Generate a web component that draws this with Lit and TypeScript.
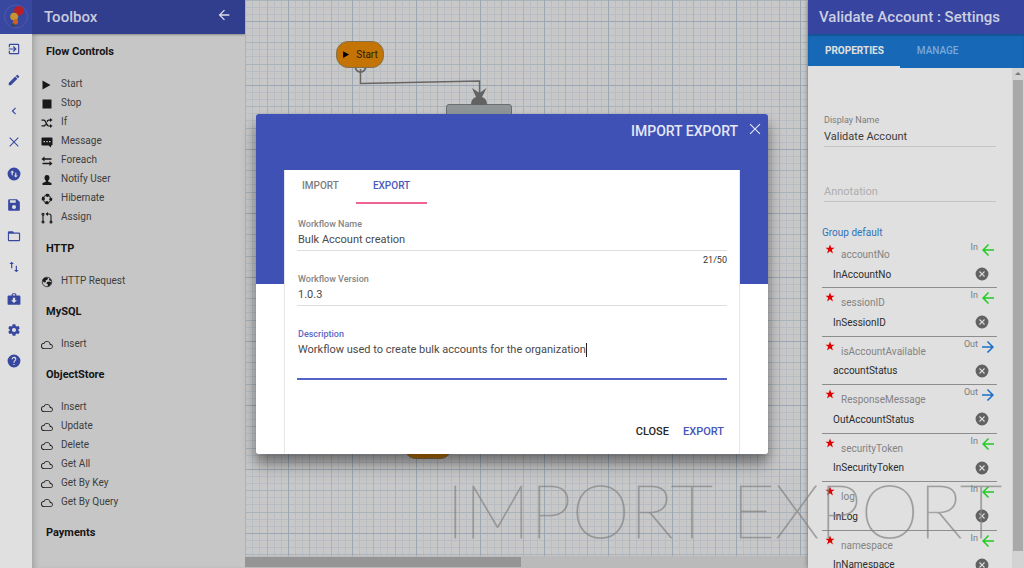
import { LitElement, html, css, svg } from "lit";
import { customElement, property, state } from "lit/decorators.js";

const ICONS: Record<string, string> = {
  exit: "M10.08 15.58 11.5 17l5-5-5-5-1.42 1.41L12.67 11H3v2h9.67zM19 3H5a2 2 0 0 0-2 2v4h2V5h14v14H5v-4H3v4a2 2 0 0 0 2 2h14a2 2 0 0 0 2-2V5a2 2 0 0 0-2-2z",
  edit: "M3 17.25V21h3.75L17.81 9.94l-3.75-3.75zM20.71 7.04a1 1 0 0 0 0-1.41l-2.34-2.34a1 1 0 0 0-1.41 0l-1.83 1.83 3.75 3.75z",
  chevron: "M15.41 7.41 14 6l-6 6 6 6 1.41-1.41L10.83 12z",
  close: "M20 5.2 18.8 4 12 10.8 5.2 4 4 5.2l6.8 6.8L4 18.8 5.2 20l6.8-6.8 6.8 6.8 1.2-1.2-6.8-6.8z",
  swapCircle: "M12 1a11 11 0 1 0 0 22 11 11 0 0 0 0-22zM5.500 9.500 9 6l3.500 3.500H10V14H8V9.500zM18.500 14.500 15 18l-3.500-3.500H14V10h2v4.500z",
  save: "M17 2H4a2 2 0 0 0-2 2v16c0 1.100.890 2 2 2h16a2 2 0 0 0 2-2V7zm-5 17a3.500 3.500 0 1 1 0-7 3.500 3.500 0 0 1 0 7zm3-11H5V4h10z",
  folder: "M20 19H3.500V8H20.500V19M20.500 6H12l-2-2H3.500A2 2 0 0 0 1.500 6v13a2 2 0 0 0 2 2h17a2 2 0 0 0 2-2V8a2 2 0 0 0-2-2z",
  swap: "M8 3 4 7h3v7h2V7h3zM17 17v-7h-2v7h-3l4 4 4-4z",
  kit: "M10 2 8 4v2H3a2 2 0 0 0-2 2v12a2 2 0 0 0 2 2h18a2 2 0 0 0 2-2V8a2 2 0 0 0-2-2h-5V4l-2-2zm0 2h4v2h-4zm2 15-5-5h3v-4h4v4h3z",
  gear: "M12 15.500A3.500 3.500 0 1 1 12 8.500a3.500 3.500 0 0 1 0 7m7.430-2.530c.040-.320.070-.640.070-.970s-.030-.660-.070-1l2.110-1.630c.190-.150.240-.420.120-.640l-2-3.460c-.120-.220-.390-.310-.610-.220l-2.490 1c-.520-.390-1.060-.730-1.690-.980l-.370-2.650A.506.506 0 0 0 14 2h-4c-.250 0-.460.180-.500.420l-.370 2.650c-.630.250-1.170.590-1.690.980l-2.490-1c-.220-.090-.490 0-.610.220l-2 3.460c-.130.220-.070.490.120.640L4.570 11c-.040.340-.070.670-.070 1s.030.650.070.970l-2.110 1.660c-.190.150-.250.420-.120.640l2 3.460c.120.220.390.300.610.220l2.490-1.010c.520.400 1.060.740 1.690.990l.370 2.650c.040.240.250.420.500.420h4c.250 0 .460-.180.500-.420l.370-2.650c.630-.260 1.170-.590 1.690-.990l2.490 1.010c.220.080.490 0 .610-.220l2-3.460c.120-.220.070-.490-.120-.640z",
  help: "M12 1a11 11 0 1 0 0 22 11 11 0 0 0 0-22zm1 18h-2v-2h2zm2.070-7.750-.9.920C13.450 12.900 13 13.500 13 15h-2v-.5c0-1.100.450-2.100 1.170-2.830l1.240-1.260A2 2 0 1 0 10 9H8a4 4 0 1 1 7.070 2.250z",
  back: "M20 11H7.830l5.590-5.590L12 4l-8 8 8 8 1.410-1.410L7.830 13H20z",
  play: "M3 3v18l16-9z",
  stop: "M3 3h18v18H3z",
  shuffle: "M1 5h5c5 0 6 12 10 12h2v-3l5 4-5 4v-3h-3C9 19 9 7.500 5.500 7.500H1zM1 19v-2.500h4c1.500 0 2.600-1.500 3.500-3.200l1.400 2.500C8.700 17.700 7.500 19 5.500 19zM18 2l5 4-5 4V7.500h-2c-1.500 0-2.500 1.300-3.400 2.900l-1.400-2.500C12.300 6.200 13.700 5 16 5h2z",
  message: "M3 3h18a2 2 0 0 1 2 2v12a2 2 0 0 1-2 2h-1v4l-5-4H3a2 2 0 0 1-2-2V5a2 2 0 0 1 2-2zm2 7v2.500h3V10zm5.500 0v2.500h3V10zM16 10v2.500h3V10z",
  repeat: "M7 3v3.500h14v3H7V13L1 8zM17 12v3.500H3v3h14V22l6-5z",
  user: "M12 2c3.500 0 5 2.300 5 5.500 0 2.500-1.300 4.500-2.500 5.500v2.500l6.500 2.500V22H3v-4l6.500-2.500V13C8.300 12 7 10 7 7.500 7 4.300 8.500 2 12 2z",
  cloud: "M19.350 10.040A7.490 7.490 0 0 0 5.350 8.040 6 6 0 0 0 6 20h13a5 5 0 0 0 .35-9.960zM19 18.300H6a4.300 4.300 0 0 1 0-8.600h.710a5.500 5.500 0 0 1 10.790 1.800v.500H19a3.150 3.150 0 0 1 0 6.300z",
  cancel: "M12 1a11 11 0 1 0 0 22 11 11 0 0 0 0-22zm5 14.600L15.600 17 12 13.400 8.400 17 7 15.600l3.600-3.600L7 8.400 8.400 7l3.600 3.600L15.600 7 17 8.400 13.400 12z",
  star: "m12 1 3 8h8l-6.500 5 2.500 8.500-7-5-7 5L7.500 14 1 9h8z",
};

const icon = (name: string) => {
  let body = svg`<path fill="currentColor" fill-rule="evenodd" d=${ICONS[name] ?? ""}></path>`;
  if (name === "ring")
    body = svg`<circle cx="12" cy="12" r="7.500" fill="none" stroke="currentColor" stroke-width="2"></circle><circle cx="12" cy="12" r="7.500" fill="none" stroke="currentColor" stroke-width="6" stroke-dasharray="6 5.780" stroke-dashoffset="3"></circle>`;
  if (name === "branch")
    body = svg`<g fill="none" stroke="currentColor" stroke-width="2.200"><circle cx="4" cy="4.500" r="2"></circle><path d="M4 6v12M20 18V7q0-3-4-3h-4"></path><circle cx="4" cy="20" r="2"></circle><circle cx="20" cy="20" r="2"></circle></g><path fill="currentColor" d="M14 0v8L9 4z"></path>`;
  if (name === "globe")
    body = svg`<circle cx="12" cy="12" r="9.500" fill="none" stroke="currentColor" stroke-width="1.500"></circle><path fill="currentColor" d="M4 6l4-3 6 1-1 3-4 2 1 3-4 1-3-4zM12 12l5-1 4 2-3 6-5 2 1-4-3-2zM17 4l4 5-3 1-2-3z"></path>`;
  return html`<svg class="icon" viewBox="0 0 24 24" aria-hidden="true">${body}</svg>`;
};

const iconStyles = css`
  * { box-sizing: border-box; }
  .icon { display: block; width: 100%; height: 100%; }
  button { border: 0; padding: 0; background: none; color: inherit; font: inherit; cursor: pointer; }
  input, textarea { border: 0; padding: 0; margin: 0; background: none; color: inherit; font: inherit; outline: 0; min-width: 0; }
`;

@customElement("tool-rail")
class ToolRail extends LitElement {
  static styles = [iconStyles, css`
    :host { display: flex; flex-direction: column; width: 32px; background: #e0e0e0; color: #3847a0; }
    .logo { flex: none; height: 33px; background: #3847a0; padding: 4px 3px; box-shadow: 0 1px #3847a0; }
    .nav { height: 344px; display: flex; flex-direction: column; }
    .nav button { flex: 1; display: grid; place-items: center; padding-right: 4px; }
    .glyph { width: 14px; height: 14px; }
  `];
  render() {
    const items = [["exit", "Exit"], ["edit", "Edit"], ["chevron", "Back"], ["close", "Close"], ["swapCircle", "Convert"], ["save", "Save"], ["folder", "Open"], ["swap", "Import export"], ["kit", "Packages"], ["gear", "Settings"], ["help", "Help"]];
    return html`
      <div class="logo">
        <svg class="icon" viewBox="0 0 26 26" aria-hidden="true">
          <circle cx="13" cy="13" r="12" fill="none" stroke="#4d5bae" stroke-width="1"></circle>
          <path d="M14 12l-2 6-2 4" stroke="#b88040" stroke-width="3"></path>
          <circle cx="16" cy="7" r="5" fill="#b82028"></circle>
          <circle cx="11" cy="13" r="4" fill="#c89430"></circle>
          <circle cx="12.500" cy="18.500" r="2.700" fill="#d06020"></circle>
          <circle cx="10" cy="22" r="2" fill="#37475a"></circle>
        </svg>
      </div>
      <nav class="nav">${items.map(([n, t]) => html`<button aria-label=${t}><span class="glyph">${icon(n)}</span></button>`)}</nav>`;
  }
}

@customElement("tool-box")
class ToolBox extends LitElement {
  static styles = [iconStyles, css`
    :host { display: block; background: #c6c6c6; overflow: hidden; box-shadow: inset 6px 0 6px -4px rgba(0,0,0,.2); color: #3d3d3d; }
    .head { display: flex; align-items: center; justify-content: space-between; height: 34px; padding: 0 13px 0 12px; background: #313e8e; color: #c9cbdd; box-shadow: 0 1px 2px rgba(0,0,0,.3); }
    h1 { margin: 0; font-size: 15px; font-weight: 500; line-height: 20px; }
    .back { width: 16px; height: 16px; color: #dcdde8; margin-bottom: 4px; }
    h2 { margin: 0; padding-left: 14px; font-size: 11px; line-height: 19px; font-weight: 700; color: #151515; }
    .groups { padding-top: 8px; }
    ul { list-style: none; margin: 0; padding: 13px 0 12px 9px; }
    section:first-child ul { padding-bottom: 13px; }
    li { display: flex; align-items: center; gap: 8px; height: 19px; font-size: 10px; line-height: 19px; }
    .glyph { width: 12px; height: 12px; color: #181818; margin-top: 2px; }
  `];
  render() {
    const groups: [string, [string, string][]][] = [
      ["Flow Controls", [["play", "Start"], ["stop", "Stop"], ["shuffle", "If"], ["message", "Message"], ["repeat", "Foreach"], ["user", "Notify User"], ["ring", "Hibernate"], ["branch", "Assign"]]],
      ["HTTP", [["globe", "HTTP Request"]]],
      ["MySQL", [["cloud", "Insert"]]],
      ["ObjectStore", ["Insert", "Update", "Delete", "Get All", "Get By Key", "Get By Query"].map((t) => ["cloud", t] as [string, string])],
      ["Payments", []],
    ];
    return html`
      <header class="head"><h1>Toolbox</h1><button class="back" aria-label="Collapse toolbox">${icon("back")}</button></header>
      <div class="groups">${groups.map(([t, items]) => html`<section><h2>${t}</h2>
        <ul>${items.map(([n, l]) => html`<li><span class="glyph">${icon(n)}</span>${l}</li>`)}</ul></section>`)}</div>`;
  }
}

@customElement("flow-canvas")
class FlowCanvas extends LitElement {
  static styles = [iconStyles, css`
    :host { display: flex; flex-direction: column; position: relative; background: #c8c8c8; overflow: hidden; }
    .board { position: relative; flex: 1; overflow: hidden; }
    .grid { position: absolute; inset: 0; width: 100%; height: 100%; }
    .wires { position: absolute; left: 0; top: 0; width: 300px; height: 120px; }
    .node { position: absolute; left: 91px; top: 41px; width: 48px; height: 27px; display: flex; align-items: center; justify-content: center; gap: 5px; border: 1px solid #83724d; border-radius: 12px; background: #c37405; color: #2b1c04; font-size: 10px; }
    .node-glyph { width: 9px; height: 9px; color: #000; }
    .end { top: 432px; left: 159px; }
    .task { position: absolute; left: 201px; top: 104px; width: 66px; height: 40px; border: 1px solid #6b6e70; border-radius: 3px; background: #8f9698; }
    .track { flex: none; height: 12px; padding: 1px 0; background: #bababa; }
    .thumb { width: 49%; height: 10px; background: #959595; }
  `];
  render() {
    const minor = [7, 14, 28, 35, 50, 57];
    return html`
      <div class="board">
        <svg class="grid" aria-hidden="true">
          <defs><pattern id="g" x="43" y="21" width="64" height="64" patternUnits="userSpaceOnUse">
            ${minor.map((p) => svg`<path d="M${p}.5 0V64M0 ${p}.5H64" stroke="#b7bdc3"></path>`)}
            ${[21, 43].map((p) => svg`<path d="M${p}.5 0V64M0 ${p}.5H64" stroke="#a8b3bc"></path>`)}
            <path d="M.5 0V64M0 .5H64" stroke="#9ba8b3"></path>
          </pattern></defs>
          <rect width="100%" height="100%" fill="url(#g)"></rect>
        </svg>
        <div class="task"></div>
        <svg class="wires" viewBox="0 0 300 120" aria-hidden="true">
          <circle cx="115.500" cy="67" r="5" fill="#c8c8c8" stroke="#666" stroke-width="2"></circle>
          <path d="M115.500 69v14.500L234.500 81v15" fill="none" stroke="#666" stroke-width="1.400"></path>
          <path d="M227 88l7.500 5 7-5-4.500 9a8 8 0 0 1 5 8h-16a8 8 0 0 1 5-8z" fill="#626262"></path>
        </svg>
        <div class="node"><span class="node-glyph">${icon("play")}</span>Start</div>
        <div class="node end"></div>
      </div>
      <div class="track"><div class="thumb"></div></div>`;
  }
}

@customElement("settings-panel")
class SettingsPanel extends LitElement {
  static styles = [iconStyles, css`
    :host { display: flex; flex-direction: column; background: #e0e0e0; overflow: hidden; box-shadow: -1px 0 4px rgba(0,0,0,.3); z-index: 1; }
    .head { flex: none; height: 34px; padding: 0 11px; display: flex; align-items: center; background: #3745a0; color: #cdcfe0; }
    h1 { margin: 0; font-size: 15px; line-height: 20px; font-weight: 500; white-space: nowrap; }
    .tabs { flex: none; height: 34px; display: flex; background: #1769b7; box-shadow: inset 0 2px 2px rgba(0,0,0,.2); font-size: 10px; font-weight: 500; color: #79aad8; }
    .tabs button { padding: 0 16px 0 17px; border-bottom: 2px solid transparent; }
    .tabs .on { color: #e0e0e0; border-color: #e0e0e0; font-weight: 700; }
    .main { flex: 1; min-height: 0; display: flex; }
    .body { flex: 1; min-width: 0; overflow: hidden; padding: 45px 15px 0 14px; }
    .field { display: flex; flex-direction: column; margin: 0 1px 0 2px; border-bottom: 1px solid #c4c4c4; }
    .field label { font-size: 9px; line-height: 14px; color: #7c7c7c; }
    .field input { height: 18px; font-size: 11px; color: #3c3c3c; margin-bottom: 1px; }
    .annotation { margin-top: 35px; margin-bottom: 24px; }
    .annotation input::placeholder { color: #adadad; opacity: 1; }
    .group { font-size: 10px; line-height: 14px; color: #2f72b8; }
    .params { display: grid; grid-auto-rows: 1fr; height: 339px; }
    .param { display: grid; grid-template-columns: 13px 1fr auto 18px; column-gap: 1px; grid-template-rows: 30px 18px; border-bottom: 1px solid #8d8d8d; overflow: hidden; }
    .star { width: 10px; height: 10px; margin: 4px 0 0 3px; color: #e00000; }
    .param label { padding: 8px 0 0 5px; font-size: 10px; line-height: 14px; color: #838383; }
    .dir { font-size: 9px; line-height: 12px; padding-top: 1px; color: #7c7c7c; }
    .arrow { width: 18px; height: 18px; margin-top: 1px; color: #1fcc1f; }
    .out { color: #1b6fc8; transform: rotate(180deg); }
    .param input { grid-column: 1 / 4; height: 14px; margin: -3px 0 0 11px; font-size: 10px; color: #2c2c2c; }
    .clear { grid-column: 4; width: 14px; height: 14px; margin: -3px 0 0 -4px; color: #626262; }
    .track { flex: none; width: 12px; display: flex; flex-direction: column; align-items: center; background: #d3d3d3; }
    .up { margin: 4px 0 5px; border: 3px solid transparent; border-top: 0; border-bottom-color: #7a7a7a; }
    .thumb { width: 10px; height: 471px; background: #a9a9a9; }
  `];
  render() {
    const params = [["accountNo", "InAccountNo", "In"], ["sessionID", "InSessionID", "In"], ["isAccountAvailable", "accountStatus", "Out"], ["ResponseMessage", "OutAccountStatus", "Out"], ["securityToken", "InSecurityToken", "In"], ["log", "InLog", "In"], ["namespace", "InNamespace", "In"]];
    return html`
      <header class="head"><h1>Validate Account : Settings</h1></header>
      <div class="tabs" role="tablist"><button class="on" role="tab" aria-selected="true">PROPERTIES</button><button role="tab">MANAGE</button></div>
      <div class="main">
        <div class="body">
          <div class="field"><label for="dn">Display Name</label><input id="dn" .value=${"Validate Account"}></div>
          <div class="field annotation"><input aria-label="Annotation" placeholder="Annotation"></div>
          <div class="group">Group default</div>
          <div class="params">${params.map(([l, v, d]) => html`<div class="param">
            <span class="star">${icon("star")}</span><label for=${l}>${l}</label>
            <span class="dir">${d}</span><span class="arrow ${d === "Out" ? "out" : ""}">${icon("back")}</span>
            <input id=${l} .value=${v}><button class="clear" aria-label="Clear ${l}">${icon("cancel")}</button>
          </div>`)}</div>
        </div>
        <div class="track"><span class="up"></span><span class="thumb"></span></div>
      </div>`;
  }
}

@customElement("export-dialog")
class ExportDialog extends LitElement {
  @property() name = "Bulk Account creation";
  @state() private version = "1.0.3";
  @state() private description = "Workflow used to create bulk accounts for the organization";
  static styles = [iconStyles, css`
    :host { display: flex; flex-direction: column; overflow: hidden; border-radius: 3px; background: linear-gradient(#3f51b5 50%, #fff 50%); box-shadow: 0 8px 12px rgba(0,0,0,.3), 0 12px 18px rgba(0,0,0,.2); }
    .head { flex: none; height: 56px; padding: 7px 5px 0 0; display: flex; justify-content: flex-end; align-items: flex-start; gap: 9px; color: #e4e7f6; }
    h1 { margin: 0; font-size: 14px; line-height: 20px; font-weight: 500; }
    .close { width: 16px; height: 16px; }
    .card { flex: 1; min-height: 0; margin: 0 28px; padding: 0 12px; background: #fff; border: 1px solid #e6e6e6; border-width: 0 1px; display: flex; flex-direction: column; }
    .tabs { flex: none; display: flex; height: 34px; margin-left: -12px; font-size: 10px; font-weight: 500; color: #7d7d7d; }
    .tabs button { padding: 0 17px; border-bottom: 2px solid transparent; }
    .tabs .on { color: #4a5abb; border-bottom-color: #ee6492; }
    .field { flex: none; display: flex; flex-direction: column; border-bottom: 1px solid #dedede; margin-top: 14px; }
    label { font-size: 9px; line-height: 12px; font-weight: 500; color: #858585; padding-left: 1px; }
    input { height: 20px; padding-left: 1px; font-size: 11px; color: #4a4a4a; }
    .counter { align-self: flex-end; font-size: 9px; line-height: 12px; margin-top: 3px; color: #333; }
    .version { margin-top: 7px; }
    .description { margin-top: 22px; border-bottom: 2px solid #5563c4; }
    .description label { color: #5c6ac4; }
    textarea { align-self: flex-start; field-sizing: content; white-space: nowrap; overflow: hidden; resize: none; height: 14px; line-height: 14px; margin: 3px 0 21px 1px; font-size: 11px; color: #4a4a4a; border-right: 1px solid #222; }
    .actions { margin-top: auto; display: flex; justify-content: flex-end; gap: 14px; padding: 0 3px 14px 0; font-size: 11px; line-height: 16px; font-weight: 500; color: #262626; }
    .primary { color: #4454b8; }
  `];
  render() {
    return html`
      <header class="head"><h1>IMPORT EXPORT</h1><button class="close" aria-label="Close dialog">${icon("close")}</button></header>
      <div class="card">
        <div class="tabs" role="tablist"><button role="tab">IMPORT</button><button class="on" role="tab" aria-selected="true">EXPORT</button></div>
        <div class="field"><label for="n">Workflow Name</label><input id="n" maxlength="50" .value=${this.name} @input=${(e: any) => (this.name = e.target.value)}></div>
        <div class="counter">${this.name.length}/50</div>
        <div class="field version"><label for="v">Workflow Version</label><input id="v" .value=${this.version}></div>
        <div class="field description"><label for="d">Description</label><textarea id="d" rows="1" .value=${this.description}></textarea></div>
        <div class="actions"><button>CLOSE</button><button class="primary">EXPORT</button></div>
      </div>`;
  }
}

@customElement("app-root")
class AppRoot extends LitElement {
  static styles = css`
    :host { display: grid; grid-template-columns: 32px 213px minmax(0, 1fr) 216px; height: 100vh; position: relative; overflow: hidden; font-family: Roboto, "Liberation Sans", sans-serif; }
    export-dialog { position: absolute; left: 25%; top: 20%; width: 50%; height: 60%; z-index: 3; }
    .caption { position: absolute; right: 22px; bottom: 2px; z-index: 2; white-space: nowrap; font-family: Lato, sans-serif; font-weight: 100; font-size: 74px; line-height: 112px; color: rgba(130,130,130,.5); -webkit-text-stroke: 1px rgba(130,130,130,.5); pointer-events: none; }
  `;
  render() {
    return html`<tool-rail></tool-rail><tool-box></tool-box><flow-canvas></flow-canvas><settings-panel></settings-panel>
      <div class="caption">IMPORT EXPORT</div>
      <export-dialog role="dialog" aria-label="Import export"></export-dialog>`;
  }
}
